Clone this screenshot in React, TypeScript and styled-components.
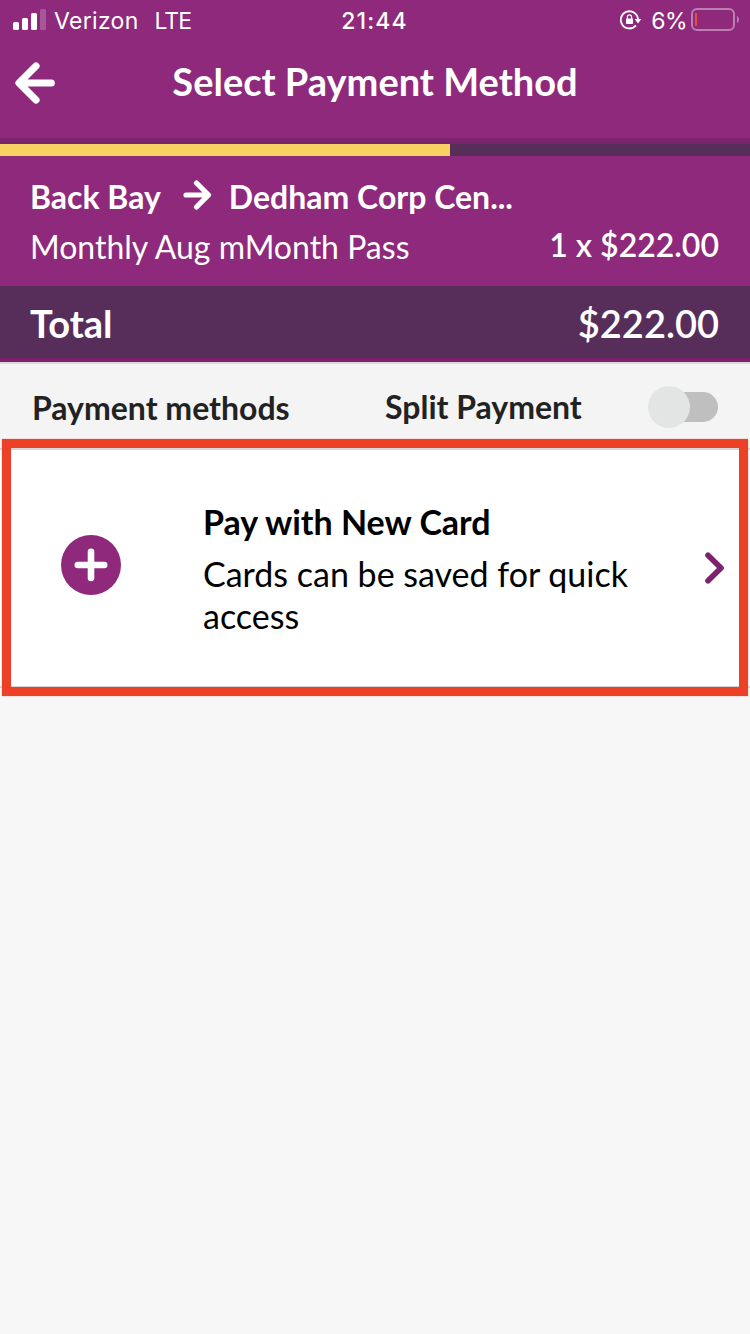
import React from "react";
import styled, { createGlobalStyle } from "styled-components";

const GlobalStyle = createGlobalStyle`
  * { box-sizing: border-box; }
  body { margin: 0; background: #f7f7f7; font-family: Lato, "Liberation Sans", sans-serif; }
`;

const Screen = styled.main`
  width: 750px;
  min-height: 1334px;
  display: flex;
  flex-direction: column;
  background: #f7f7f7;
`;

const StatusBar = styled.div`
  display: grid;
  grid-template-columns: 1fr auto 1fr;
  align-items: center;
  height: 40px;
  padding: 1px 11px 0 13px;
  background: #8e297c;
  color: #fff;
  font-family: Inter, sans-serif;
  font-size: 23px;
  line-height: 40px;
`;

const StatusGroup = styled.div<{ $end?: boolean }>`
  display: flex;
  align-items: center;
  justify-content: ${(p) => (p.$end ? "flex-end" : "flex-start")};
  white-space: pre;
  svg { margin-top: -2px; }
`;

const Carrier = styled.span`
  margin-left: 8px;
  letter-spacing: 0.3px;
`;

const Network = styled.span`
  margin-left: 16px;
  letter-spacing: -1px;
`;

const Clock = styled.span`
  margin-left: -3px;
  font-weight: 550;
  letter-spacing: 1.1px;
`;

const Percent = styled.span`
  margin: 0 4px 0 9px;
  letter-spacing: -0.6px;
`;

const Header = styled.header`
  display: flex;
  align-items: center;
  height: 98px;
  padding: 0 13px 13px 12px;
  background: #8e297c;
  color: #fff;
`;

const BackButton = styled.button`
  display: flex;
  width: 44px;
  padding: 0;
  border: 0;
  background: none;
  color: inherit;
`;

const Title = styled.h1`
  flex: 1;
  margin: -3px 43px 0 0;
  text-align: center;
  font-size: 38px;
  font-weight: 700;
  line-height: 46px;
`;

const Divider = styled.div<{ $size: number; $color: string }>`
  height: ${(p) => p.$size}px;
  background: ${(p) => p.$color};
`;

const ProgressTrack = styled.div`
  height: 12px;
  background: #572d5a;
`;

const ProgressFill = styled.div`
  width: 60%;
  height: 100%;
  background: #f7d262;
`;

const Trip = styled.section`
  display: flex;
  flex-direction: column;
  height: 130px;
  padding: 15px 31px 0 30px;
  background: #8e297c;
  color: #fff;
  font-size: 32px;
`;

const Route = styled.div`
  display: flex;
  align-items: center;
  height: 50px;
  font-weight: 700;
  svg { margin: -2px 17px 0 21px; }
`;

const PassLine = styled.div`
  display: flex;
  justify-content: space-between;
  height: 50px;
  line-height: 52px;
`;

const PassName = styled.span``;

const Price = styled.span`
  font-weight: 600;
  margin-top: -2px;
`;

const Total = styled.section`
  display: flex;
  align-items: center;
  justify-content: space-between;
  height: 72px;
  padding: 2px 31px 0 30px;
  background: #572d5a;
  color: #fff;
  font-size: 38px;
`;

const TotalLabel = styled.span`
  font-weight: 700;
`;

const TotalAmount = styled.span`
  font-weight: 600;
`;

const MethodsBar = styled.section`
  display: flex;
  align-items: center;
  height: 84px;
  padding: 2px 32px 0;
  background: #f4f4f4;
  color: #222;
  font-size: 32px;
  font-weight: 700;
`;

const MethodsLabel = styled.h2`
  flex: 0 0 353px;
  margin: 0;
  font-size: 32px;
  font-weight: 700;
`;

const SplitLabel = styled.span`
  flex: 1;
  margin-top: -2px;
`;

const Toggle = styled.button`
  display: flex;
  align-items: center;
  width: 60px;
  height: 30px;
  margin-top: -1px;
  padding: 0;
  border: 0;
  border-radius: 15px;
  background: #bfbfbf;
`;

const Knob = styled.span`
  flex: none;
  width: 42px;
  height: 42px;
  margin-left: -10px;
  border-radius: 50%;
  background: #e3e5e4;
`;

const Card = styled.section`
  position: relative;
  display: flex;
  align-items: center;
  height: 240px;
  padding: 0 26px 0 61px;
  border: solid #d9d6d8;
  border-width: 2px 0;
  background: #fff;
  color: #000;
`;

const Highlight = styled.div`
  position: absolute;
  top: -11.5px;
  left: 1.5px;
  width: 746px;
  height: 257px;
  border: 9px solid #ec4126;
  box-shadow: 0 0 1px rgba(236, 65, 38, 0.7);
`;

const CardText = styled.div`
  flex: 1;
  margin: 1px 0 0 82px;
`;

const CardTitle = styled.h3`
  margin: 0 0 10px;
  font-size: 34px;
  font-weight: 700;
  line-height: 42px;
`;

const CardNote = styled.p`
  width: 450px;
  margin: 0;
  font-size: 34px;
  line-height: 42px;
`;

const PlusIcon = styled.svg`
  margin-top: -7px;
`;

const Signal = () => (
  <svg width="33" height="22" viewBox="0 0 33 22" fill="#fff">
    <rect x="0" y="13" width="6" height="8" rx="1.5" />
    <rect x="9" y="9" width="6" height="12" rx="1.5" />
    <rect x="18" y="4" width="6" height="17" rx="1.5" />
    <rect x="27" y="0" width="6" height="21" rx="1.5" opacity=".22" />
  </svg>
);

const RotationLock = () => (
  <svg width="22" height="20" viewBox="0 0 22 20">
    <path d="M18 9.500A8.600 8.600 0 1 0 16 15.400" fill="none" stroke="#fff" strokeWidth="1.8" />
    <path d="M14.600 9h6.800L18 13.400z" fill="#fff" />
    <rect x="6" y="8.500" width="7" height="5.500" rx=".7" fill="#fff" />
    <path d="M7.400 9V7a2.100 2.100 0 0 1 4.200 0v2" fill="none" stroke="#fff" strokeWidth="1.2" />
  </svg>
);

const Battery = () => (
  <svg width="48" height="24" viewBox="0 0 48 24">
    <rect x="1" y="1" width="42" height="21" rx="5" fill="none" stroke="#bb7fb0" strokeWidth="2" />
    <path d="M46 8c2.600 1 2.600 6 0 7z" fill="#bb7fb0" />
    <rect x="4" y="5" width="2" height="13" rx=".8" fill="#ee4f36" />
  </svg>
);

const BackArrow = () => (
  <svg width="44" height="44" viewBox="0 0 44 44" fill="none" stroke="#fff" strokeWidth="7.200" strokeLinecap="round" strokeLinejoin="round">
    <path d="M24 5 7 22 24 39M8 22h31.300" />
  </svg>
);

const RouteArrow = () => (
  <svg width="30" height="30" viewBox="0 0 30 30" fill="none" stroke="#fff" strokeWidth="5.200" strokeLinecap="round" strokeLinejoin="round">
    <path d="M14.500 3 26.500 15 14.500 27M4 15H26" />
  </svg>
);

const PlusBadge = () => (
  <PlusIcon width="60" height="60" viewBox="0 0 60 60">
    <circle cx="30" cy="30" r="30" fill="#8e297c" />
    <path d="M30 16.800v26.200M16.800 30h26.400" stroke="#fff" strokeWidth="6.600" strokeLinecap="round" />
  </PlusIcon>
);

const Chevron = () => (
  <svg width="20" height="34" viewBox="0 0 20 34" fill="none" stroke="#7d226d" strokeWidth="5.600" strokeLinecap="round" strokeLinejoin="round">
    <path d="M4 4.200 17 17 4 29.800" />
  </svg>
);

export default function App() {
  return (
    <Screen>
      <GlobalStyle />
      <StatusBar>
        <StatusGroup>
          <Signal />
          <Carrier>Verizon</Carrier>
          <Network>LTE</Network>
        </StatusGroup>
        <Clock>21:44</Clock>
        <StatusGroup $end>
          <RotationLock />
          <Percent>6%</Percent>
          <Battery />
        </StatusGroup>
      </StatusBar>
      <Header>
        <BackButton aria-label="Back"><BackArrow /></BackButton>
        <Title>Select Payment Method</Title>
      </Header>
      <Divider $size={6} $color="#7b246c" />
      <ProgressTrack><ProgressFill /></ProgressTrack>
      <Trip>
        <Route>
          <span>Back Bay</span>
          <RouteArrow />
          <span>Dedham Corp Cen...</span>
        </Route>
        <PassLine>
          <PassName>Monthly Aug mMonth Pass</PassName>
          <Price>1 x $222.00</Price>
        </PassLine>
      </Trip>
      <Total>
        <TotalLabel>Total</TotalLabel>
        <TotalAmount>$222.00</TotalAmount>
      </Total>
      <Divider $size={4} $color="#7b226b" />
      <Divider $size={2} $color="#dcd9dc" />
      <MethodsBar>
        <MethodsLabel>Payment methods</MethodsLabel>
        <SplitLabel>Split Payment</SplitLabel>
        <Toggle role="switch" aria-checked={false} aria-label="Split Payment"><Knob /></Toggle>
      </MethodsBar>
      <Card>
        <PlusBadge />
        <CardText>
          <CardTitle>Pay with New Card</CardTitle>
          <CardNote>Cards can be saved for quick access</CardNote>
        </CardText>
        <Chevron />
        <Highlight />
      </Card>
    </Screen>
  );
}
